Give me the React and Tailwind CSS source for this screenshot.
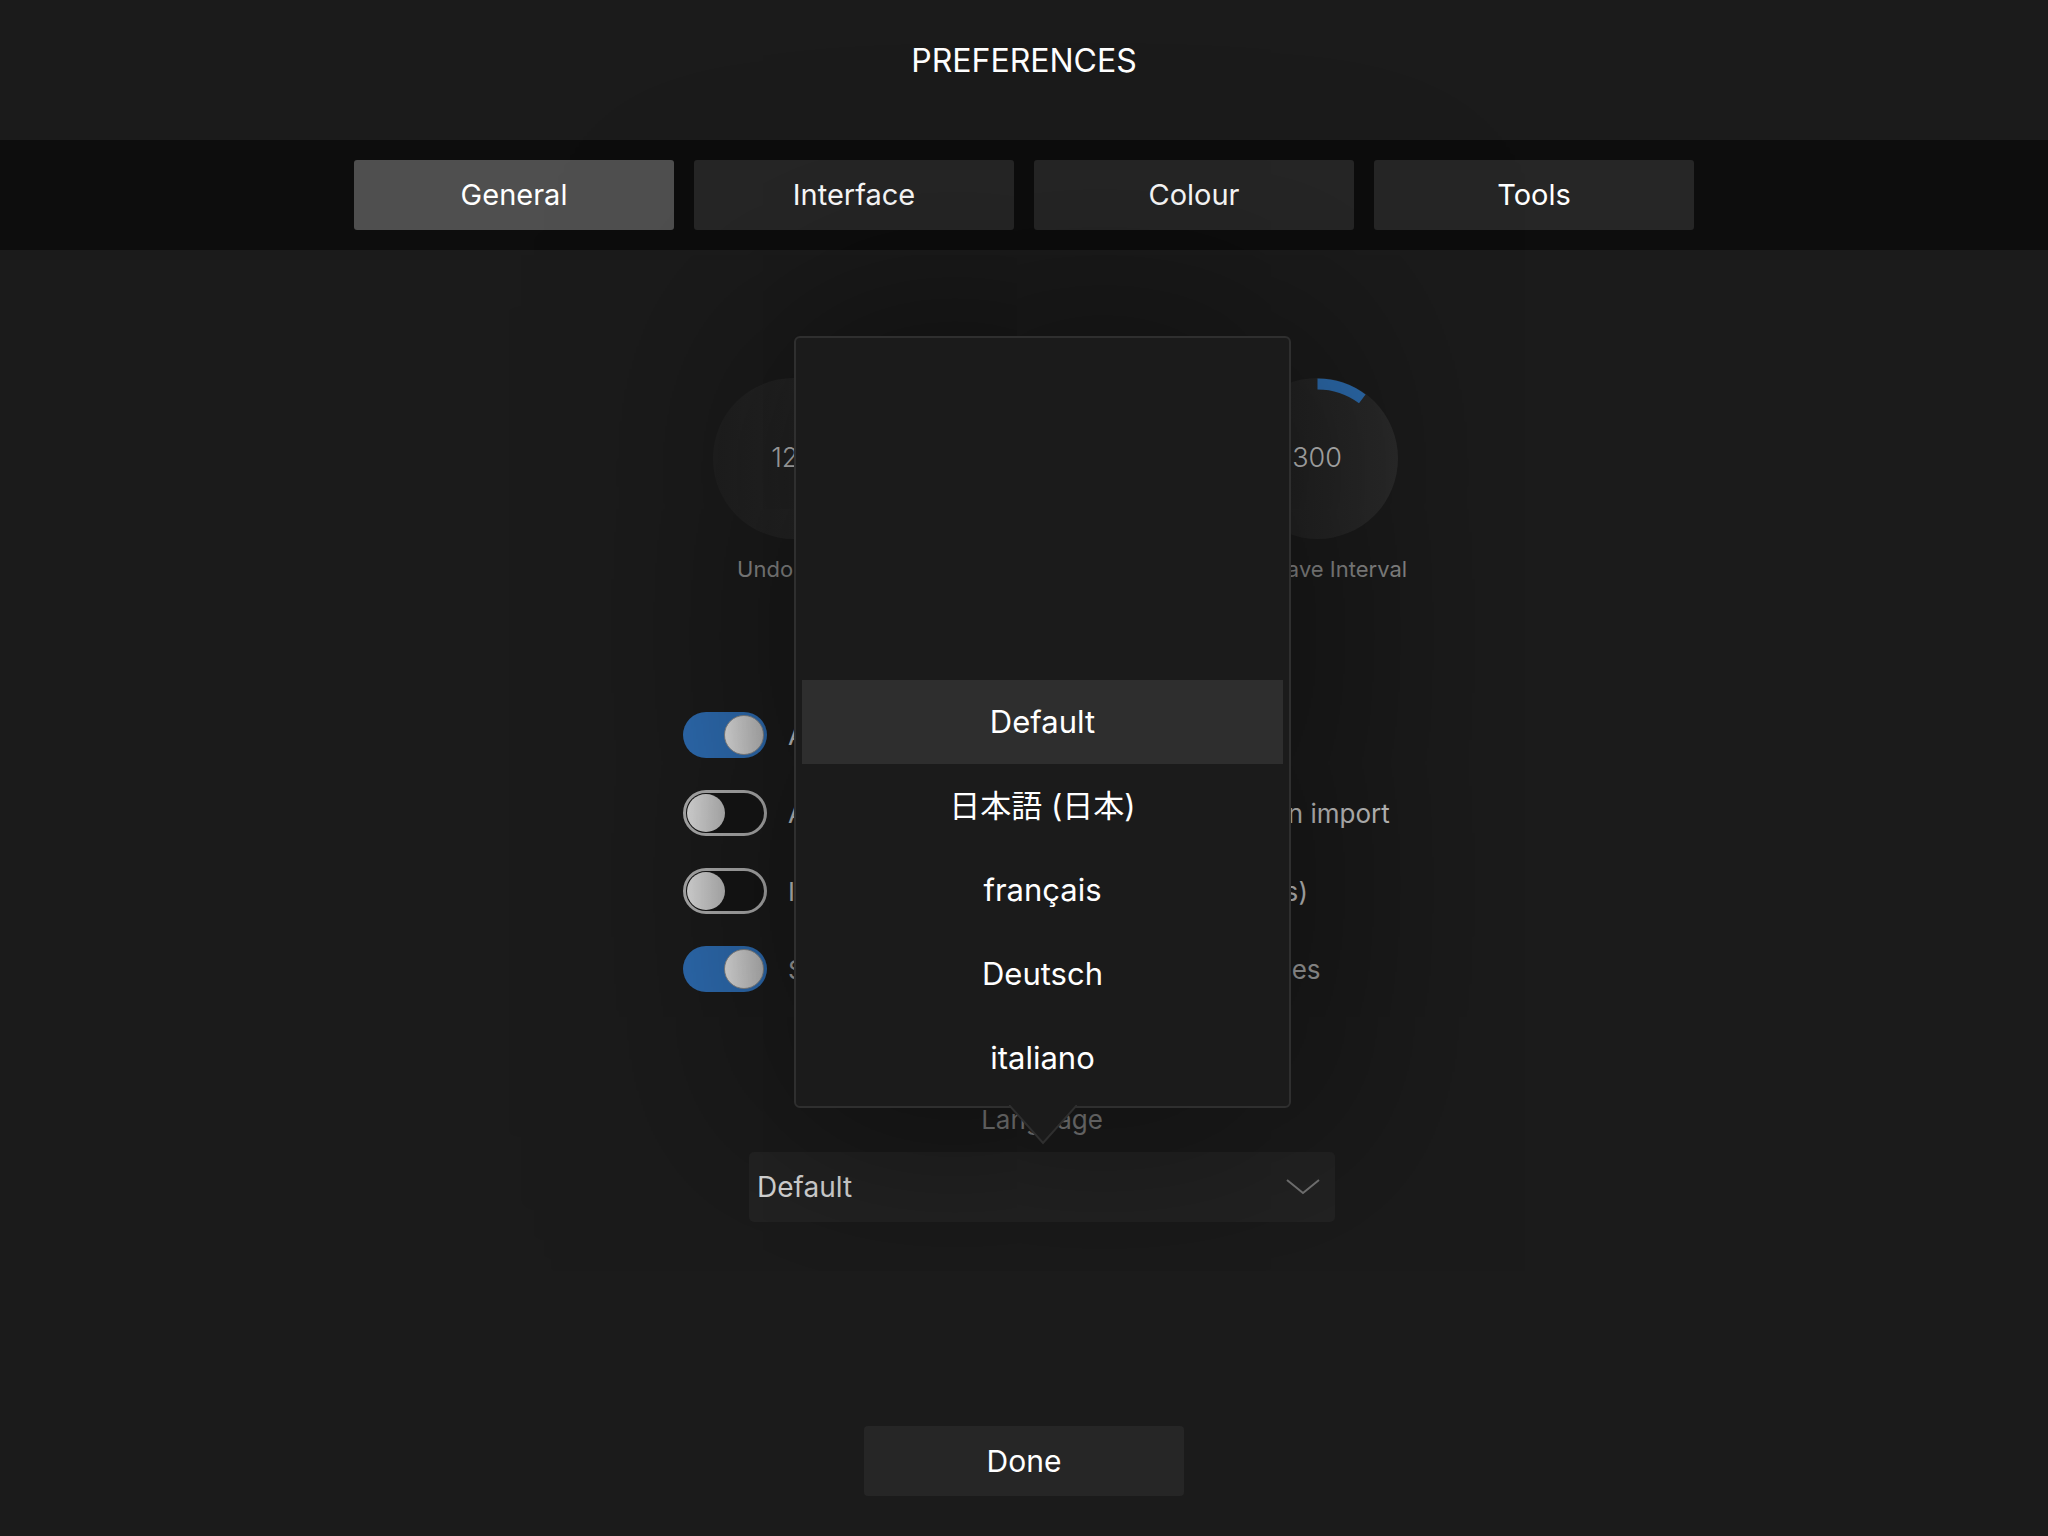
import React from "react";

const tabs = ["General", "Interface", "Colour", "Tools"];

const knobs = [
  { value: "128", label: "Undo Limit", arc: false },
  { value: "2048", label: "Max Texture Size", arc: false },
  { value: "300", label: "Autosave Interval", arc: true },
];

const toggles = [
  { on: true, label: "Autosave documents", cls: "text-[#c8c8c8]" },
  { on: false, label: "Assign default document colour profile on import", cls: "text-[#c8c8c8]" },
  { on: false, label: "Ignore colour profiles (JPEG and TIF files)", cls: "text-[#c8c8c8] tracking-[0.16px]" },
  { on: true, label: "Show tooltips and extra hints for all brushes", cls: "text-[#a4a4a4] tracking-[-0.12px]" },
];

const languages = ["Default", "日本語 (日本)", "français", "Deutsch", "italiano"];

function Knob({ value, label, arc }) {
  return (
    <div className="w-[262px] flex flex-col items-center">
      <div className="relative w-[161px] h-[161px] rounded-full bg-gradient-to-r from-[#202020] to-[#2b2b2b] flex items-center justify-center">
        {arc && (
          <svg className="absolute inset-0" width="161" height="161" viewBox="0 0 161 161">
            <path
              d="M80.5 6 A74.5 74.5 0 0 1 125.3 20.9"
              fill="none"
              stroke="#2d6db0"
              strokeWidth="11"
            />
          </svg>
        )}
        <span className="text-[27px] font-light text-[#c4c4c4]">{value}</span>
      </div>
      <div className="mt-[15px] leading-[30px] text-[22px] text-[#8a8a8a]">{label}</div>
    </div>
  );
}

function Toggle({ on }) {
  if (on) {
    return (
      <div className="w-[84px] h-[46px] rounded-full bg-[#2e6db3] flex items-center justify-end pr-[3px]">
        <div className="w-[40px] h-[40px] rounded-full bg-gradient-to-r from-[#e4e4e4] to-[#bcbcbc] border border-[#8a8a8a]" />
      </div>
    );
  }
  return (
    <div className="w-[84px] h-[46px] rounded-full border-[3px] border-[#b0b0b0] bg-[#161616] flex items-center pl-[1px]">
      <div className="w-[38px] h-[38px] rounded-full bg-gradient-to-r from-[#e0e0e0] to-[#bcbcbc]" />
    </div>
  );
}

export default function App() {
  return (
    <div className="w-[2048px] h-[1536px] bg-[#1b1b1b] text-white overflow-hidden" style={{ fontFamily: "Inter, 'Noto Sans CJK JP', sans-serif" }}>
      {/* header */}
      <div className="h-[140px] bg-[#1b1b1b] flex justify-center pt-[41px]">
        <h1 className="text-[32px] leading-[40px] text-white">PREFERENCES</h1>
      </div>

      {/* tabs */}
      <div className="h-[110px] bg-[#0d0d0d] flex justify-center gap-[20px] pt-[20px]">
        {tabs.map((t, i) => (
          <div
            key={t}
            className={
              "w-[320px] h-[70px] rounded-[3px] flex items-center justify-center text-[29px] " +
              (i === 0 ? "bg-[#4f4f4f]" : "bg-[#262626]")
            }
          >
            {t}
          </div>
        ))}
      </div>

      {/* main */}
      <div className="relative h-[1286px] bg-[#1b1b1b]">
        <div className="flex ml-[662px] pt-[128px]">
          {knobs.map((k) => (
            <Knob key={k.label} {...k} />
          ))}
        </div>

        <div className="ml-[683px] mt-[112px] flex flex-col">
          {toggles.map((t, i) => (
            <div key={i} className="h-[78px] flex items-center gap-[21px]">
              <Toggle on={t.on} />
              <span className={"text-[26px] " + t.cls}>{t.label}</span>
            </div>
          ))}
        </div>

        <div className="ml-[749px] w-[586px] mt-[97px] flex flex-col items-center">
          <div className="leading-[30px] text-[26px] text-[#7c7c7c]">Language</div>
          <div className="mt-[17px] w-full h-[70px] rounded-[5px] bg-[#232323] flex items-center justify-between pl-[8px] pr-[15px]">
            <span className="text-[28px] text-[#dedede]">Default</span>
            <svg width="34" height="16" viewBox="0 0 34 16">
              <path d="M1 1 L17 14 L33 1" fill="none" stroke="#767676" strokeWidth="2" />
            </svg>
          </div>
        </div>

        <div className="flex justify-center mt-[204px]">
          <div className="w-[320px] h-[70px] rounded-[4px] bg-[#262626] flex items-center justify-center text-[30px]">
            Done
          </div>
        </div>

        {/* language popover */}
        <div className="absolute left-[794px] top-[86px] w-[497px] h-[772px] rounded-[6px] border-2 border-[#2f2f2f] bg-[#1b1b1b] p-[6px] shadow-[0_0_220px_30px_rgba(0,0,0,0.5)]">
          <div className="h-[336px]" />
          {languages.map((l, i) => (
            <div
              key={l}
              className={
                "h-[84px] flex items-center justify-center text-[31px] text-white " +
                (i === 0 ? "bg-[#2e2e2e]" : "")
              }
            >
              {l}
            </div>
          ))}
        </div>
        <svg className="absolute left-[1009px] top-[855px]" width="68" height="40" viewBox="0 0 68 40">
          <path d="M0 0 L34 38 L68 0 Z" fill="#1b1b1b" />
          <path d="M0 0 L34 38 L68 0" fill="none" stroke="#2f2f2f" strokeWidth="2" />
        </svg>
      </div>
    </div>
  );
}
